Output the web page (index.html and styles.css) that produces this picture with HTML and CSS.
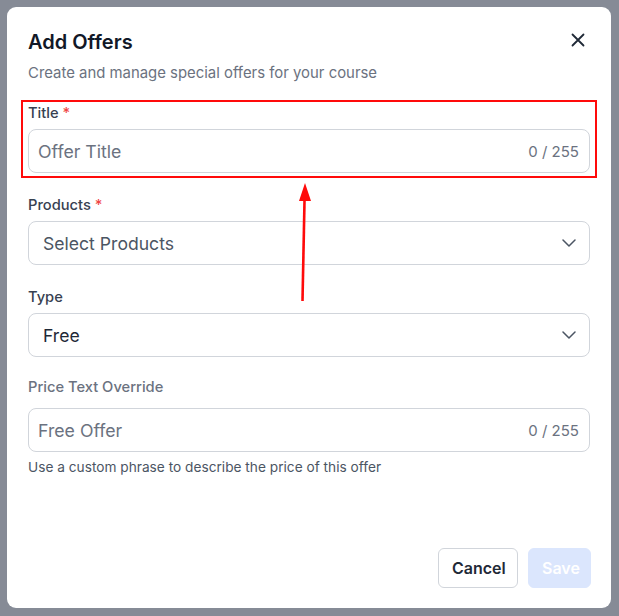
FILE: index.html
```html
<!DOCTYPE html>
<html lang="en">
<head>
<meta charset="utf-8">
<title>Add Offers</title>
<link rel="stylesheet" href="styles.css">
</head>
<body>
<div class="modal">
  <div class="header">
    <div class="heading">
      <h1 class="title">Add Offers</h1>
      <p class="subtitle">Create and manage special offers for your course</p>
    </div>
    <button class="close" aria-label="Close">
      <svg width="14" height="14" viewBox="0 0 14 14"><path d="M1.5 1.5L12.5 12.5M12.5 1.5L1.5 12.5" stroke="#1f2937" stroke-width="1.8" stroke-linecap="round"/></svg>
    </button>
  </div>

  <div class="form">
    <div class="field">
      <label class="label">Title <span class="req">*</span></label>
      <div class="input">
        <span class="placeholder">Offer Title</span>
        <span class="counter">0 / 255</span>
      </div>
    </div>

    <div class="field">
      <label class="label">Products <span class="req">*</span></label>
      <div class="input select">
        <span class="select-text">Select Products</span>
        <svg class="chev" width="14" height="8" viewBox="0 0 14 8"><path d="M1 1L7 7L13 1" fill="none" stroke="#4b5563" stroke-width="1.5" stroke-linecap="round" stroke-linejoin="round"/></svg>
      </div>
    </div>

    <div class="field">
      <label class="label">Type</label>
      <div class="input select">
        <span class="select-text value">Free</span>
        <svg class="chev" width="14" height="8" viewBox="0 0 14 8"><path d="M1 1L7 7L13 1" fill="none" stroke="#4b5563" stroke-width="1.5" stroke-linecap="round" stroke-linejoin="round"/></svg>
      </div>
    </div>

    <div class="field field-last">
      <label class="label muted">Price Text Override</label>
      <div class="input">
        <span class="placeholder">Free Offer</span>
        <span class="counter">0 / 255</span>
      </div>
      <p class="help">Use a custom phrase to describe the price of this offer</p>
    </div>
  </div>

  <div class="footer">
    <button class="btn cancel">Cancel</button>
    <button class="btn save">Save</button>
  </div>
</div>

<div class="annot-box"></div>
<svg class="annot-arrow" width="619" height="616" viewBox="0 0 619 616">
  <path d="M302.5 301L304.6 196" stroke="#ff0a0a" stroke-width="2.6" fill="none"/>
  <polygon points="305,183 299,201 311,201" fill="#ff0a0a"/>
</svg>
</body>
</html>
```

FILE: styles.css
```css
* { box-sizing: border-box; }

html, body {
  margin: 0;
  padding: 0;
}

body {
  background: #868b96;
  width: 619px;
  height: 616px;
  overflow: hidden;
  font-family: Inter, "Noto Sans", "Liberation Sans", sans-serif;
  padding: 7px 8px 8px 7px;
}

.modal {
  background: #ffffff;
  width: 604px;
  height: 601px;
  border-radius: 9px;
  padding: 21px 20px 20px 21px;
  display: flex;
  flex-direction: column;
}

.header {
  display: flex;
  justify-content: space-between;
  align-items: flex-start;
}

.title {
  margin: 0;
  font-size: 20px;
  line-height: 28px;
  font-weight: 600;
  color: #111827;
}

.subtitle {
  margin: 7px 0 0;
  font-size: 14.9px;
  line-height: 20px;
  color: #6b7280;
}

.close {
  border: 0;
  background: none;
  padding: 0;
  margin: 5px 6px 0 0;
  width: 14px;
  height: 14px;
  display: flex;
}

.form {
  margin-top: 20px;
  padding-right: 1px;
}

.field + .field {
  margin-top: 22px;
}

.field.field-last {
  margin-top: 20px;
}

.label {
  display: block;
  font-size: 14.7px;
  line-height: 20px;
  font-weight: 500;
  color: #374151;
  margin-bottom: 6px;
}

.label.muted {
  color: #6b7280;
  margin-bottom: 11px;
}

.req {
  color: #ef4444;
}

.input {
  height: 44px;
  border: 1px solid #d1d5db;
  border-radius: 8px;
  display: flex;
  align-items: center;
  justify-content: space-between;
  padding: 0 10px 0 9px;
}

.placeholder {
  font-size: 17.7px;
  color: #6b7280;
}

.counter {
  font-size: 15px;
  color: #6b7280;
}

.select {
  padding: 0 13px 0 14px;
}

.select-text {
  font-size: 17.6px;
  color: #4b5563;
}

.select-text.value {
  color: #1f2937;
}

.chev {
  display: block;
}

.help {
  margin: 6px 0 0;
  font-size: 13.7px;
  line-height: 18px;
  color: #4b5563;
}

.footer {
  margin-top: auto;
  display: flex;
  justify-content: flex-end;
  gap: 10px;
}

.btn {
  height: 40px;
  border-radius: 6px;
  font-family: inherit;
  font-size: 16px;
  font-weight: 600;
  padding: 0 13px;
}

.cancel {
  width: 80px;
  background: #ffffff;
  border: 1px solid #d1d5db;
  color: #1f2937;
}

.save {
  width: 63px;
  background: #dbe6fd;
  border: 1px solid #dbe6fd;
  color: #ffffff;
}

.annot-box {
  position: absolute;
  left: 21px;
  top: 100px;
  width: 576px;
  height: 78px;
  border: 2.5px solid #ff0a0a;
}

.annot-arrow {
  position: absolute;
  left: 0;
  top: 0;
  pointer-events: none;
}
```
